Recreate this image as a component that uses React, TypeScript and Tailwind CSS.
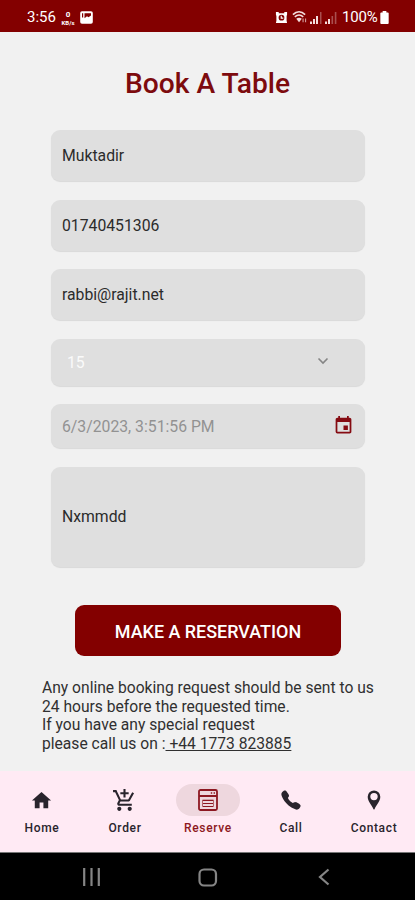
import { useState } from 'react'
import type { ReactNode } from 'react'
import { IoCall } from 'react-icons/io5'
import { MdAddShoppingCart, MdEvent, MdHome } from 'react-icons/md'
import clsx from 'clsx'

function StatusBar() {
  return (
    <header className="flex h-8 items-center justify-between bg-[#830000] pr-[26px] pl-[27px] text-white">
      <div className="flex items-center pt-[3px]">
        <span className="w-[30px] text-[15px] leading-none">3:56</span>
        <div className="ml-1 flex w-[14px] flex-col items-center">
          <span className="text-[8px] leading-[9px] font-bold">0</span>
          <span className="text-[6px] leading-[7px] font-bold">KB/s</span>
        </div>
        <svg className="ml-[5px] h-[13px] w-[13px]" viewBox="0 0 13 13">
          <rect x=".2" y=".2" width="12.6" height="12.6" rx="1.8" fill="#fff" />
          <path d="M2 2.200h1.200v4.300H2zM4.500 2.200H11v2.300L8.500 6.300 7 5.200 4.500 7.300z" fill="#830000" />
        </svg>
      </div>
      <div className="flex items-center pt-0.5">
        <svg className="h-[13px] w-[13px]" viewBox="0 0 13 14">
          <path d="M.5 1h3v1.300h6V1h3v3l-.5 1.500v5l.5 2.500H.5l.500-2.500v-5L.5 4z" fill="#fff" />
          <circle cx="6.500" cy="7.200" r="3.100" fill="#830000" />
          <path d="M6.200 5v2.700h2.200" stroke="#fff" strokeWidth="1.200" fill="none" />
        </svg>
        <svg className="ml-1 h-[14px] w-[15px]" viewBox="0 0 16 14" fill="none" stroke="#f3dede">
          <path d="M1 4.500C5 .6 10 .6 14 4.500M3 6.800c3-2.600 6-2.600 9 0" strokeWidth="1.700" />
          <path d="M4.500 8.800q3-2 6 0L7.500 12.500z" fill="#f3dede" stroke="none" />
          <path d="M11.800 8.500v4M14.500 8.500v4" strokeWidth="1.100" opacity=".75" />
        </svg>
        <svg className="ml-[3px] h-[13px] w-3" viewBox="0 0 12 13">
          <path d="M0 10.500h2v2.500H0zM3 8h2v5H3zM6 5h2v8H6z" fill="#f3dede" />
          <path d="M10 1h1.500v12H10z" fill="#a94f4f" />
        </svg>
        <svg className="ml-[3px] h-[13px] w-3" viewBox="0 0 12 13">
          <path d="M0 10.500h2v2.500H0zM3 8h2v5H3z" fill="#f3dede" />
          <path d="M6.500 5h1.600v8H6.500zM9.800 1h1.600v12H9.800z" fill="#a94f4f" />
        </svg>
        <span className="ml-[5px] w-[35px] text-[15px] leading-none tracking-[-0.2px]">100%</span>
        <svg className="ml-[3px] h-[13px] w-[9px]" viewBox="0 0 9 14">
          <path d="M2.500 0h4v1.500H8q1 0 1 1V13q0 1-1 1H1q-1 0-1-1V2.500q0-1 1-1h1.500z" fill="#fff" />
        </svg>
      </div>
    </header>
  )
}

function Field({ className, children }: { className: string; children: ReactNode }) {
  return (
    <div className={clsx('flex items-center rounded-[9px] bg-[#dfdfdf] px-[11px] text-[15.75px] text-[#2b2b2b] shadow-[0_1px_1px_rgba(0,0,0,0.1)]', className)}>
      {children}
    </div>
  )
}

function ReserveIcon() {
  return (
    <svg className="h-[22px] w-5" viewBox="0 0 20 22" fill="none" stroke="#8d1822">
      <rect x="1" y="1" width="18" height="20" rx="1.500" strokeWidth="1.800" />
      <path d="M1 7h18" strokeWidth="2" />
      <path d="M4.500 11h11v6.500h-11z" strokeWidth="1" opacity=".6" />
      <path d="M5 11.500h10M5 14.500h10M5 17.500h10" strokeWidth="1.200" />
      <path d="M12.800 4h1.400M15.600 4H17" strokeWidth="1.400" />
    </svg>
  )
}

function PinIcon() {
  return (
    <svg className="h-5 w-[14px]" viewBox="0 0 14 20">
      <path fillRule="evenodd" d="M7 .5A6.300 6.300 0 0 0 .7 6.800C.7 11.500 4.600 14.500 6.500 19.200q.5.600 1 0c1.900-4.700 5.800-7.700 5.800-12.400A6.300 6.300 0 0 0 7 .5zm0 2.400a3.700 3.700 0 1 1 0 7.400 3.700 3.700 0 0 1 0-7.400z" fill="#29242c" />
    </svg>
  )
}

const tabs = [
  { label: 'Home', icon: <MdHome size={23} /> },
  { label: 'Order', icon: <MdAddShoppingCart size={25} /> },
  { label: 'Reserve', icon: <ReserveIcon /> },
  { label: 'Call', icon: <IoCall size={22} /> },
  { label: 'Contact', icon: <PinIcon /> },
]

export default function App() {
  const [active, setActive] = useState('Reserve')

  return (
    <div className="flex h-[900px] w-[415px] flex-col overflow-hidden bg-[#f1f1f1] font-[Roboto,sans-serif]">
      <StatusBar />

      <main className="flex flex-1 flex-col">
        <h1 className="mt-[35px] h-[63px] text-center text-[28.2px] leading-[34px] font-medium text-[#7d0b0e]">
          Book A Table
        </h1>

        <div className="ml-[51px] flex w-[314px] flex-col">
          <Field className="h-[51px]">Muktadir</Field>
          <Field className="mt-[19px] h-[51px]">01740451306</Field>
          <Field className="mt-[18px] h-[51px]">rabbi@rajit.net</Field>
          <Field className="mt-[19px] h-[47px] justify-between">
            <span className="pl-[5px] text-[#fafafa]">15</span>
            <svg className="mr-[25px] mb-1 h-2 w-3" viewBox="0 0 12 8" fill="none" stroke="#858585" strokeWidth="1.600">
              <path d="M1.500 1.500 6 6l4.500-4.500" />
            </svg>
          </Field>
          <Field className="mt-[18px] h-[44px] justify-between">
            <span className="pt-0.5 text-[#929292]">6/3/2023, 3:51:56 PM</span>
            <MdEvent size={21} className="mb-0.5 text-[#850b12]" />
          </Field>
          <Field className="mt-[19px] h-[100px]">Nxmmdd</Field>
        </div>

        <button className="mt-[38px] ml-[75px] h-[51px] w-[266px] rounded-[9px] bg-[#830000] pt-[3px] text-[17.95px] font-medium text-white">
          MAKE A RESERVATION
        </button>

        <p className="mt-[23px] ml-[42px] text-[15.64px] leading-[18.5px] whitespace-nowrap text-[#303030]">
          Any online booking request should be sent to us
          <br />
          24 hours before the requested time.
          <br />
          If you have any special request
          <br />
          please call us on :<span className="whitespace-pre underline"> +44 1773 823885</span>
        </p>
      </main>

      <nav className="flex h-[81px] justify-between bg-[#ffeaf4] pt-[13px]">
        {tabs.map(tab => (
          <button
            key={tab.label}
            onClick={() => setActive(tab.label)}
            className={clsx('flex w-[83px] flex-col items-center', active === tab.label ? 'text-[#8d1822]' : 'text-[#29242c]')}
          >
            <span className={clsx('flex h-8 w-16 items-center justify-center rounded-full', active === tab.label && 'bg-[#eed7de]')}>
              {tab.icon}
            </span>
            <span className="mt-1 pl-px text-[12px] leading-4 font-medium tracking-[0.65px]">{tab.label}</span>
          </button>
        ))}
      </nav>

      <footer className="flex h-12 items-center border-t border-[#777] bg-black pt-px">
        <svg className="ml-[83px] h-[18px] w-[17px]" viewBox="0 0 17 18" stroke="#858585" strokeWidth="2.200">
          <path d="M1.200 0v18M8.500 0v18M15.800 0v18" />
        </svg>
        <svg className="ml-[98px] h-[19px] w-5" viewBox="0 0 20 19" fill="none" stroke="#858585" strokeWidth="2.200">
          <rect x="1.500" y="1.500" width="16.500" height="16" rx="4.500" />
        </svg>
        <svg className="ml-[100px] h-[18px] w-3" viewBox="0 0 12 18" fill="none" stroke="#858585" strokeWidth="2.200">
          <path d="M10.500 1.500 2 9l8.500 7.500" />
        </svg>
      </footer>
    </div>
  )
}
